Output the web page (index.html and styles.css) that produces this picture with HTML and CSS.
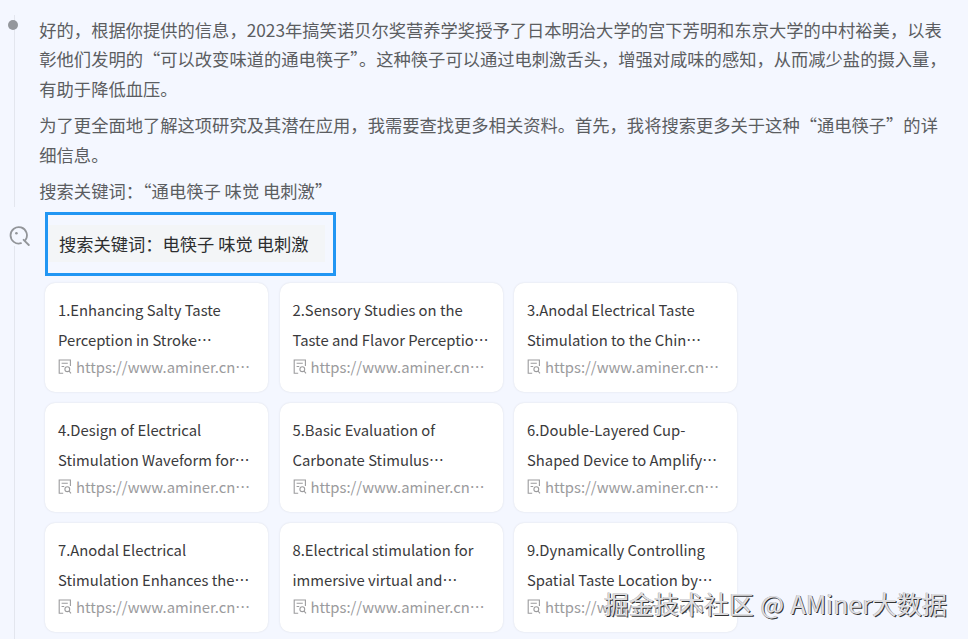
FILE: index.html
```html
<!DOCTYPE html>
<html lang="zh-CN">
<head>
<meta charset="utf-8">
<title>搜索关键词</title>
<link rel="stylesheet" href="styles.css">
</head>
<body>
<svg class="defs" width="0" height="0">
  <symbol id="doc" viewBox="0 0 14 15">
    <path d="M5.2 14.2H1.2V1h11.2v6M3.6 4.3h6.2M3.6 7.5h2.6M11 12l2 2.4"/>
    <circle cx="9.3" cy="10.2" r="2.4"/>
  </symbol>
</svg>
<main class="timeline">
  <section class="step">
    <div class="rail first"><span class="dot"></span></div>
    <div class="prose">
      <p>好的，根据你提供的信息，2023年搞笑诺贝尔奖营养学奖授予了日本明治大学的宫下芳明和东京大学的中村裕美，以表<br>彰他们发明的“可以改变味道的通电筷子”。这种筷子可以通过电刺激舌头，增强对咸味的感知，从而减少盐的摄入量，<br>有助于降低血压。</p>
      <p>为了更全面地了解这项研究及其潜在应用，我需要查找更多相关资料。首先，我将搜索更多关于这种“通电筷子”的详<br>细信息。</p>
      <p>搜索关键词：“通电筷子 味觉 电刺激”</p>
    </div>
  </section>
  <section class="step">
    <div class="rail second">
      <svg class="search" viewBox="0 0 22 22"><circle class="eye" cx="7.4" cy="7.2" r="1.3"/><path d="M12 17.2A8.2 8.2 0 1 1 16.6 13.8M14.6 13.8l5.2 5.2"/></svg>
    </div>
    <div class="results">
      <div class="keyword"><span>搜索关键词：电筷子 味觉 电刺激</span></div>
      <div class="grid">
        <article class="card"><h3>1.Enhancing Salty Taste<br>Perception in Stroke⋯</h3><div class="url"><svg><use href="#doc"/></svg>https://www.aminer.cn⋯</div></article>
        <article class="card"><h3>2.Sensory Studies on the<br>Taste and Flavor Perceptio⋯</h3><div class="url"><svg><use href="#doc"/></svg>https://www.aminer.cn⋯</div></article>
        <article class="card"><h3>3.Anodal Electrical Taste<br>Stimulation to the Chin⋯</h3><div class="url"><svg><use href="#doc"/></svg>https://www.aminer.cn⋯</div></article>
        <article class="card"><h3>4.Design of Electrical<br>Stimulation Waveform for⋯</h3><div class="url"><svg><use href="#doc"/></svg>https://www.aminer.cn⋯</div></article>
        <article class="card"><h3>5.Basic Evaluation of<br>Carbonate Stimulus⋯</h3><div class="url"><svg><use href="#doc"/></svg>https://www.aminer.cn⋯</div></article>
        <article class="card"><h3>6.Double-Layered Cup-<br>Shaped Device to Amplify⋯</h3><div class="url"><svg><use href="#doc"/></svg>https://www.aminer.cn⋯</div></article>
        <article class="card"><h3>7.Anodal Electrical<br>Stimulation Enhances the⋯</h3><div class="url"><svg><use href="#doc"/></svg>https://www.aminer.cn⋯</div></article>
        <article class="card"><h3>8.Electrical stimulation for<br>immersive virtual and⋯</h3><div class="url"><svg><use href="#doc"/></svg>https://www.aminer.cn⋯</div></article>
        <article class="card"><h3>9.Dynamically Controlling<br>Spatial Taste Location by⋯</h3><div class="url"><svg><use href="#doc"/></svg>https://www.aminer.cn⋯</div></article>
      </div>
    </div>
  </section>
</main>
<div class="watermark">掘金技术社区 @ AMiner大数据</div>
</body>
</html>
```
FILE: styles.css
```css
* { box-sizing: border-box; }
body {
  margin: 0;
  height: 639px;
  overflow: hidden;
  position: relative;
  background: #f4f7ff;
  font-family: "Noto Sans CJK SC", sans-serif;
  color: #333;
}
.defs { display: block; }
.timeline { display: flex; flex-direction: column; }
.step { display: flex; }
.rail {
  flex: none;
  width: 39px;
  background: linear-gradient(#e3e6ee, #e3e6ee) 14px 0 / 1px 100% no-repeat;
}
.first { display: flow-root; margin-top: 15px; height: 192px; }
.dot {
  display: block;
  width: 10px;
  height: 10px;
  margin: 5px 0 0 8px;
  border-radius: 50%;
  background: #94979c;
}
.prose { padding: 14.5px 0 0 0.3px; height: 212px; white-space: nowrap; }
.prose p {
  margin: 0 0 6px;
  font-size: 17.29px;
  line-height: 29.85px;
  color: #5b5d61;
}
.second { background-position: 14px 34px; height: 427px; padding: 14px 0 0 9px; }
.search { display: block; width: 22px; height: 22px; fill: none; stroke: #929599; stroke-width: 1.8; stroke-linecap: round; }
.search .eye { fill: #929599; stroke: none; }
.results { padding-left: 6px; }
.keyword {
  width: 291px;
  height: 64px;
  border: 3px solid #2196f3;
  padding: 10px 8px 11px 0;
}
.keyword span {
  display: block;
  height: 37px;
  padding-left: 11px;
  font-size: 17.28px;
  line-height: 37px;
  white-space: nowrap;
  color: #2d2e30;
  background: #f3f5f7;
}
.grid {
  display: grid;
  grid-template-columns: repeat(3, 223px);
  grid-auto-rows: 109px;
  gap: 11px 11.5px;
  margin-top: 6.5px;
}
.card {
  padding: 12.5px 0 0 13px;
  border-radius: 10px;
  background: #fff;
  box-shadow: 0 0 2px #d8dbe2;
  white-space: nowrap;
}
.card h3 { margin: 0; font-size: 14.8px; line-height: 30px; font-weight: 400; color: #3a3a3c; }
.url { display: flex; align-items: center; height: 23px; font-size: 14.8px; color: #9b9b9d; }
.url svg { width: 14px; height: 15px; margin-right: 4px; fill: none; stroke: #9b9b9d; stroke-width: 1.1; }
.watermark {
  position: absolute;
  left: 604px;
  top: 585px;
  font-size: 25px;
  line-height: 36px;
  word-spacing: 1px;
  white-space: nowrap;
  color: #dedee1;
  text-shadow: 1px 1px 0 #333, -0.5px -0.5px 0 #aaa;
}
```
